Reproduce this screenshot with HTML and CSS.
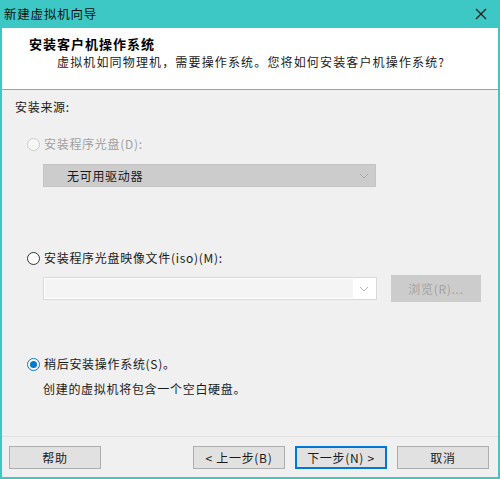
FILE: index.html
```html
<!doctype html>
<html>
	<head>
		<title>新建虚拟机向导</title>
		<link rel="stylesheet" href="styles.css">
	</head>

	<body>
		<div class="window">
			<div class="titlebar">
				<span class="title-text">新建虚拟机向导</span>
				<svg class="close-icon" width="12" height="12" viewBox="0 0 12 12" xmlns="http://www.w3.org/2000/svg">
					<path d="M1 1 L11 11 M11 1 L1 11" stroke="#1a1a1a" stroke-width="1.2" fill="none"></path>
				</svg>
			</div>

			<div class="frame">
				<div class="header">
					<div class="header-title">安装客户机操作系统</div>
					<div class="header-sub">虚拟机如同物理机，需要操作系统。您将如何安装客户机操作系统?</div>
				</div>

				<div class="body">
					<div class="section-label">安装来源:</div>

					<div class="radio-row disabled first">
						<span class="radio"></span>
						<span>安装程序光盘(D):</span>
					</div>
					<div class="select select-disabled">
						<span class="select-text">无可用驱动器</span>
						<svg class="chevron" width="10" height="6" viewBox="0 0 10 6" xmlns="http://www.w3.org/2000/svg">
							<path d="M1 1 L5 5 L9 1" stroke="#a9a9a9" stroke-width="1" fill="none"></path>
						</svg>
					</div>

					<div class="radio-row second">
						<span class="radio"></span>
						<span>安装程序光盘映像文件(iso)(M):</span>
					</div>
					<div class="file-row">
						<div class="combo">
							<div class="combo-edit"></div>
							<svg class="chevron" width="10" height="6" viewBox="0 0 10 6" xmlns="http://www.w3.org/2000/svg">
								<path d="M1 1 L5 5 L9 1" stroke="#b4b4b4" stroke-width="1" fill="none"></path>
							</svg>
						</div>
						<button class="browse-button">浏览(R)...</button>
					</div>

					<div class="radio-row third">
						<span class="radio checked"></span>
						<span>稍后安装操作系统(S)。</span>
					</div>
					<div class="note">创建的虚拟机将包含一个空白硬盘。</div>
				</div>

				<div class="footer">
					<button class="btn">帮助</button>
					<div class="spacer"></div>
					<button class="btn">&lt; 上一步(B)</button>
					<button class="btn btn-default">下一步(N) &gt;</button>
					<button class="btn">取消</button>
				</div>
			</div>
		</div>
	</body>
</html>
```

FILE: styles.css
```css
html,
body {
	margin: 0px;
	padding: 0px;
}

body {
	width: 500px;
	height: 479px;
	font-family: "Noto Sans CJK SC", "Noto Sans", sans-serif;
	font-size: 12px;
	letter-spacing: 0.7px;
	color: #1a1a1a;
	background-color: #3dc8c5;
}

.window {
	width: 500px;
	height: 479px;
	display: flex;
	flex-direction: column;
	background-color: #3dc8c5;
}

.titlebar {
	height: 28px;
	display: flex;
	align-items: center;
	justify-content: space-between;
	padding: 0 13px 0 4px;
	flex-shrink: 0;
}

.title-text {
	font-size: 12.5px;
	letter-spacing: 0.8px;
	color: #111;
	line-height: 28px;
}

.close-icon {
	margin-top: -1px;
}

.frame {
	flex: 1;
	display: flex;
	flex-direction: column;
	margin: 0 2px 2px 2px;
	background-color: #f0f0f0;
}

/* white header strip */
.header {
	height: 62px;
	background-color: #ffffff;
	border-bottom: 1px solid #a0a0a0;
	padding: 7px 0 0 27px;
	box-sizing: border-box;
}

.header-title {
	font-weight: 700;
	font-size: 13px;
	letter-spacing: 1px;
	line-height: 18px;
	color: #000;
}

.header-sub {
	line-height: 18px;
	padding-left: 28px;
	letter-spacing: 1.15px;
}

.body {
	flex: 1;
	padding: 8px 0 0 13px;
	display: flex;
	flex-direction: column;
	align-items: flex-start;
}

.section-label {
	line-height: 18px;
}

.radio-row {
	display: flex;
	align-items: center;
	gap: 4px;
	line-height: 18px;
	padding-left: 12px;
}

.radio-row.first {
	margin-top: 19px;
}

.radio-row.second {
	margin-top: 62px;
}

.radio-row.third {
	margin-top: 53px;
}

.radio-row.disabled {
	color: #a0a0a0;
}

.radio {
	width: 11px;
	height: 11px;
	border: 1px solid #333333;
	border-radius: 50%;
	background-color: #ffffff;
	position: relative;
	flex-shrink: 0;
}

.radio-row.disabled .radio {
	border-color: #cccccc;
	background-color: #f7f7f7;
}

.radio.checked {
	border-color: #0078d7;
}

.radio.checked::before {
	content: "";
	position: absolute;
	top: 2px;
	left: 2px;
	width: 7px;
	height: 7px;
	border-radius: 50%;
	background-color: #0078d7;
}

.select {
	margin: 11px 0 0 28px;
	width: 333px;
	height: 23px;
	box-sizing: border-box;
	display: flex;
	align-items: center;
	justify-content: space-between;
	padding: 0 6px 0 23px;
}

.select-disabled {
	background-color: #cccccc;
	border: 1px solid #c4c4c4;
	color: #1a1a1a;
}

.file-row {
	display: flex;
	align-items: center;
	margin: 8px 0 0 28px;
	gap: 14px;
}

.combo {
	width: 334px;
	height: 23px;
	box-sizing: border-box;
	border: 1px solid #d9d9d9;
	background-color: #ffffff;
	display: flex;
	align-items: center;
	padding: 1px 7px 1px 1px;
	gap: 6px;
}

.combo-edit {
	flex: 1;
	height: 100%;
	background-color: #f4f4f4;
}

.browse-button {
	width: 90px;
	height: 27px;
	border: 1px solid #cccccc;
	background-color: #cccccc;
	color: #a3a3a3;
	font-family: inherit;
	font-size: 12px;
	letter-spacing: 0.7px;
	padding: 0;
}

.note {
	margin: 7px 0 0 28px;
	line-height: 18px;
}

.footer {
	height: 41px;
	border-top: 1px solid #dfdfdf;
	display: flex;
	align-items: center;
	padding: 0 9px 0 7px;
	gap: 10px;
	box-sizing: border-box;
	flex-shrink: 0;
}

.spacer {
	flex: 1;
}

.btn {
	width: 92px;
	height: 23px;
	box-sizing: border-box;
	border: 1px solid #adadad;
	background-color: #e1e1e1;
	font-family: inherit;
	font-size: 12px;
	letter-spacing: 0.7px;
	color: #1a1a1a;
	padding: 0;
}

.btn-default {
	border: 2px solid #0078d7;
}
```
